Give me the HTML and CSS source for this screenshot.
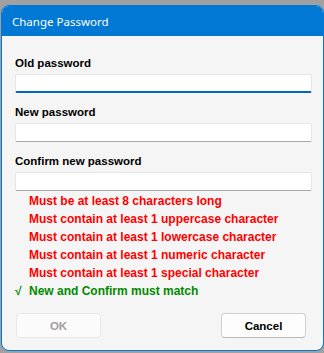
FILE: index.html
```html
<!DOCTYPE html>
<html>
<head>
<meta charset="utf-8">
<link rel="stylesheet" href="styles.css">
</head>
<body>
<div class="window">
  <div class="titlebar">Change Password</div>
  <div class="content">
    <div class="field">
      <label class="label">Old password</label>
      <div class="input focused"></div>
    </div>
    <div class="field">
      <label class="label">New password</label>
      <div class="input"></div>
    </div>
    <div class="field">
      <label class="label">Confirm new password</label>
      <div class="input"></div>
    </div>
    <ul class="rules">
      <li class="rule bad"><span class="mark"></span>Must be at least 8 characters long</li>
      <li class="rule bad"><span class="mark"></span>Must contain at least 1 uppercase character</li>
      <li class="rule bad"><span class="mark"></span>Must contain at least 1 lowercase character</li>
      <li class="rule bad"><span class="mark"></span>Must contain at least 1 numeric character</li>
      <li class="rule bad"><span class="mark"></span>Must contain at least 1 special character</li>
      <li class="rule good"><span class="mark">√</span>New and Confirm must match</li>
    </ul>
    <div class="buttons">
      <button class="btn" disabled>OK</button>
      <button class="btn">Cancel</button>
    </div>
  </div>
</div>
</body>
</html>
```
FILE: styles.css
```css
html, body {
  margin: 0;
  padding: 0;
}
body {
  background: #a0a0a0;
  font-family: "Liberation Sans", Arial, sans-serif;
  width: 324px;
  height: 353px;
  overflow: hidden;
}
.window {
  box-sizing: border-box;
  margin: 5px 0 0 1px;
  width: 323px;
  height: 346px;
  border: 1px solid #0078d4;
  border-radius: 8px;
  overflow: hidden;
  background: #f5f5f5;
}
.titlebar {
  height: 30px;
  background: #0078d4;
  color: #ffffff;
  font-family: "Noto Sans", "Open Sans", sans-serif;
  font-size: 11.5px;
  display: flex;
  align-items: center;
  padding-left: 10px;
}
.content {
  padding: 20px 11px 0 13px;
}
.field + .field {
  margin-top: 12px;
}
.label {
  display: block;
  font-size: 11.5px;
  font-weight: bold;
  line-height: 15px;
  color: #000;
  margin-bottom: 3px;
}
.input {
  box-sizing: border-box;
  height: 19px;
  background: #ffffff;
  border: 1px solid #e6e6e6;
  border-bottom-color: #a8a8a8;
  border-radius: 2px;
}
.input.focused {
  border-bottom: 2px solid #0067c0;
}
.rules {
  list-style: none;
  margin: 1px 0 0 0;
  padding: 0;
}
.rule {
  display: flex;
  font-size: 12px;
  font-weight: bold;
  line-height: 18px;
}
.mark {
  width: 14px;
  flex: none;
}
.bad {
  color: #ff0000;
}
.good {
  color: #008a00;
}
.buttons {
  display: flex;
  justify-content: space-between;
  margin-top: 13px;
  padding: 0 6px 0 1px;
}
.btn {
  box-sizing: border-box;
  width: 85px;
  height: 25px;
  background: #fdfdfd;
  border: 1px solid #d0d0d0;
  border-bottom-color: #b8b8b8;
  border-radius: 4px;
  font-family: "Liberation Sans", Arial, sans-serif;
  font-size: 11.5px;
  font-weight: bold;
  color: #000;
  padding: 0;
}
.btn:disabled {
  background: #fbfbfb;
  border-color: #e8e8e8;
  color: #a0a0a0;
}
```
